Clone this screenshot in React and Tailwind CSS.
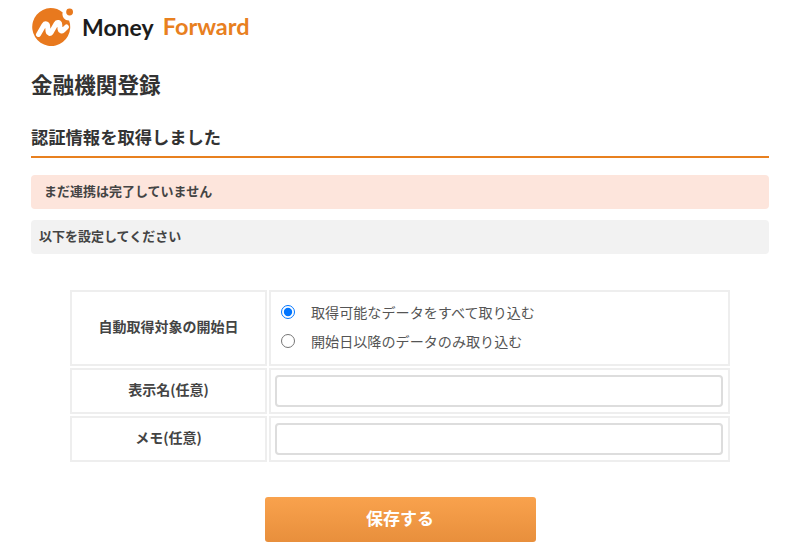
import React from 'react';

const Logo = () => (
    <div className="flex items-center h-[40px]">
        <svg width="50" height="40" viewBox="0 0 50 40" className="shrink-0">
            <path d="M19.5 1a19 19 0 0 1 12.2 4.4a6.4 6.4 0 0 0 6.4 8.2a19 19 0 1 1-18.6-12.6z" fill="#e8791e" />
            <circle cx="38.6" cy="5" r="3.4" fill="#e8791e" />
            <path d="M7.5 27.5l5.5-9.5c1.2-1.9 3.4-1.4 3.6.8l.5 6c.2 1.8 2 2.2 3 .7l5-8.8c1.2-2 3.4-1.4 3.6.8l.4 5c.2 1.6 1.7 2 2.8 1l3.6-3.6" fill="none" stroke="#fff" strokeWidth="5" strokeLinecap="round" strokeLinejoin="round" />
        </svg>
        <span className="ml-[1px] text-[23px] font-bold leading-none text-[#1c1c1c] font-['Lato',sans-serif]">Money</span>
        <span className="ml-[9px] text-[23.5px] font-bold leading-none text-[#e8801f] font-['Lato',sans-serif]">Forward</span>
    </div>
);

const Label = ({ children }) => (
    <div className="flex items-center justify-center border-2 border-[#eeeeee] pb-[3px] text-[14px] font-bold text-[#444444]">
        {children}
    </div>
);

const TextRow = () => (
    <div className="flex items-center border-2 border-[#eeeeee] pl-[4px] pr-[5px]">
        <input type="text" className="h-[32px] w-full rounded border-2 border-[#dddddd] bg-white outline-none" />
    </div>
);

const App = () => {
    return (
        <div className="h-[555px] w-[800px] overflow-hidden bg-white px-[31px] pt-[7px] font-['Noto_Sans_CJK_JP',sans-serif] text-[#333333]">
            <Logo />

            <h1 className="mt-[22px] text-[21.6px] font-bold leading-[30px]">金融機関登録</h1>

            <h2 className="mt-[25px] border-b-2 border-[#e8801f] pb-[6px] text-[17.3px] font-bold leading-[26px]">認証情報を取得しました</h2>

            <div className="mt-[17px] flex h-[34px] items-center rounded bg-[#fde5dc] pb-[2px] pl-[13px] text-[13px] font-bold text-[#444444]">まだ連携は完了していません</div>
            <div className="mt-[11px] flex h-[34px] items-center rounded bg-[#f2f2f2] pb-[2px] pl-[8px] text-[13px] font-bold text-[#444444]">以下を設定してください</div>

            <div className="mx-[39px] mt-[36px] grid grid-cols-[197px_1fr] grid-rows-[76px_46px_46px] gap-[2px]">
                <Label>自動取得対象の開始日</Label>
                <div className="flex flex-col justify-center gap-[9px] border-2 border-[#eeeeee] pb-[3px] pl-[10px] text-[14.1px] text-[#555555]">
                    <label className="flex items-center leading-[20px]">
                        <input type="radio" name="start" defaultChecked className="m-0 h-[14px] w-[14px] accent-[#0075ff]" />
                        <span className="ml-[16px]">取得可能なデータをすべて取り込む</span>
                    </label>
                    <label className="flex items-center leading-[20px]">
                        <input type="radio" name="start" className="m-0 h-[14px] w-[14px]" />
                        <span className="ml-[16px]">開始日以降のデータのみ取り込む</span>
                    </label>
                </div>
                <Label>表示名(任意)</Label>
                <TextRow />
                <Label>メモ(任意)</Label>
                <TextRow />
            </div>

            <div className="mt-[35px] flex justify-center">
                <button type="button" className="h-[45px] w-[271px] rounded-[3px] bg-gradient-to-b from-[#f9a24d] to-[#e88f3c] pb-[3px] text-[17px] font-bold text-white">保存する</button>
            </div>
        </div>
    );
};

export default App;
